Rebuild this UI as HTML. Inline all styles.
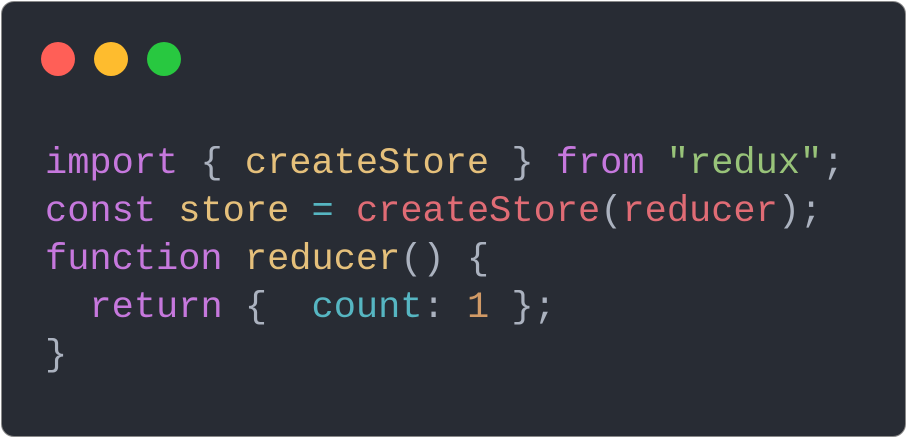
<!DOCTYPE html>
<html><head><style>
html,body{margin:0;padding:0;background:#fff;width:909px;height:440px;overflow:hidden}
.card{position:absolute;left:1px;top:1px;width:905px;height:436px;background:#282c34;border-radius:13px;border:1px solid #8a8a8a;box-sizing:border-box}
.dot{position:absolute;top:40px;width:34px;height:34px;border-radius:50%}
pre{position:absolute;left:45px;top:140px;margin:0;font-family:"Liberation Mono","DejaVu Sans Mono",monospace;font-size:37px;line-height:48px;color:#abb2bf}
.k{color:#c678dd}.y{color:#e5c07b}.g{color:#98c379}.r{color:#e06c75}.c{color:#56b6c2}.o{color:#d19a66}
</style></head><body>
<div class="card">
<div class="dot" style="left:39px;background:#ff5f57"></div>
<div class="dot" style="left:92px;background:#febc2e"></div>
<div class="dot" style="left:145px;background:#28c840"></div>
</div>
<pre><span class="k">import</span> { <span class="y">createStore</span> } <span class="k">from</span> <span class="g">"redux"</span>;
<span class="k">const</span> <span class="y">store</span> <span class="c">=</span> <span class="r">createStore</span>(<span class="r">reducer</span>);
<span class="k">function</span> <span class="y">reducer</span>() {
  <span class="k">return</span> {  <span class="c">count</span>: <span class="o">1</span> };
}</pre>
</body></html>
